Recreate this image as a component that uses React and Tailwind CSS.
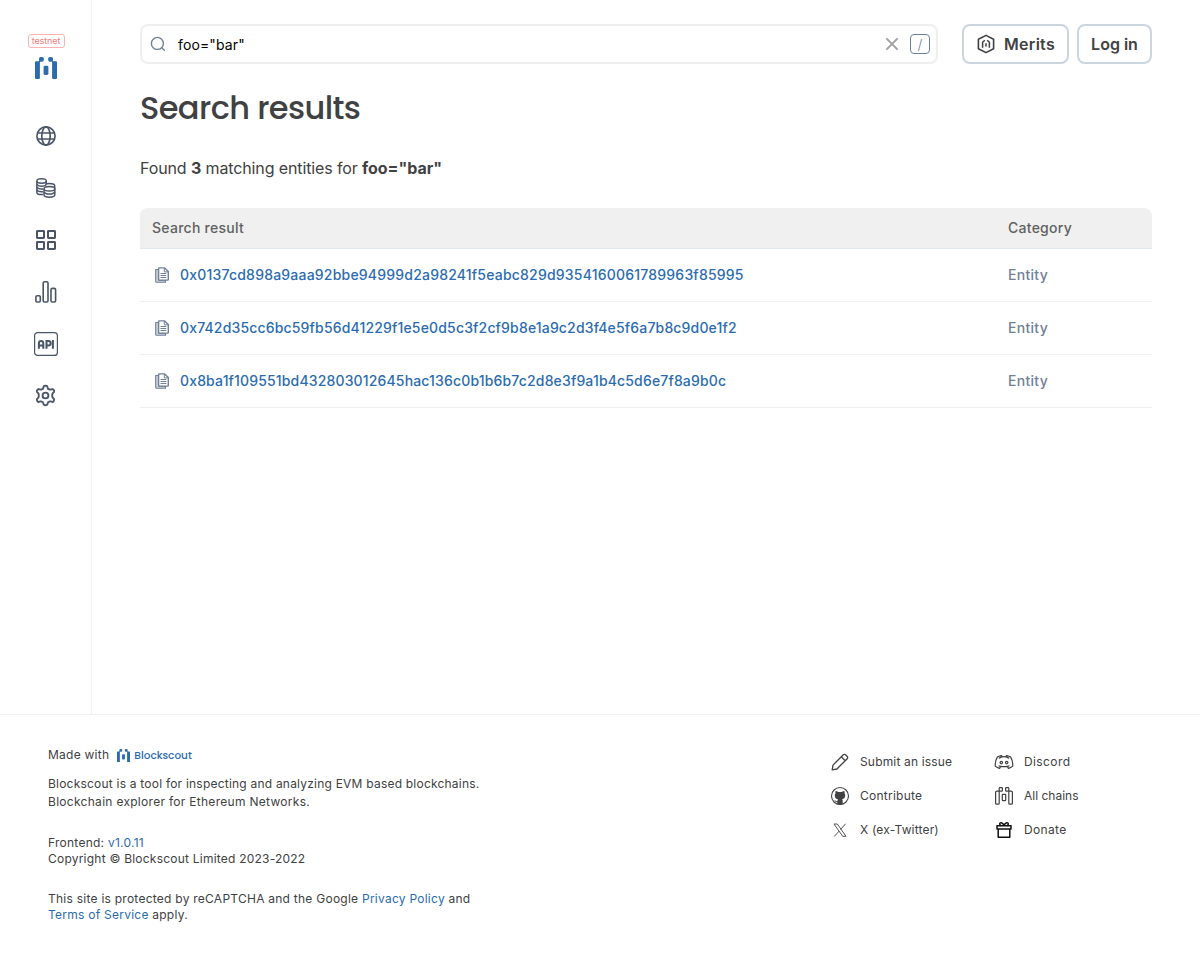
import React from 'react';

const rows = [
  ['0x0137cd898a9aaa92bbe94999d2a98241f5eabc829d9354160061789963f85995', 'tracking-[0.205px]'],
  ['0x742d35cc6bc59fb56d41229f1e5e0d5c3f2cf9b8e1a9c2d3f4e5f6a7b8c9d0e1f2', 'tracking-[0.165px]'],
  ['0x8ba1f109551bd432803012645hac136c0b1b6b7c2d8e3f9a1b4c5d6e7f8a9b0c', 'tracking-[0.158px]'],
];

function LogoMark({ className }) {
  return (
    <svg viewBox="0 0 22 22" fill="currentColor" className={className}>
      <rect x="0" y="4.3" width="4.9" height="17.7" rx="1" />
      <rect x="17.1" y="4.3" width="4.9" height="17.7" rx="1" />
      <rect x="4" y="0" width="4.8" height="4.7" rx="1.6" />
      <rect x="13.2" y="0" width="4.8" height="4.7" rx="1.6" />
      <path d="M3 5.2 5 3.2v2z M19 5.2 17 3.2v2z" />
      <rect x="8.6" y="8.7" width="4.8" height="9.2" rx="1.4" />
    </svg>
  );
}

function GlobeIcon() {
  return (
    <svg viewBox="0 0 20 20" className="size-5" fill="none" stroke="currentColor" strokeWidth="1.65">
      <circle cx="10" cy="10" r="9.1" />
      <ellipse cx="10" cy="10" rx="4.2" ry="9.1" />
      <path d="M1.6 7h16.8M1.6 13h16.8" />
    </svg>
  );
}

function CoinsIcon() {
  return (
    <svg viewBox="0 0 20 20" className="size-5" fill="none" stroke="currentColor" strokeWidth="1.5">
      <ellipse cx="5.6" cy="3" rx="4.7" ry="2.2" />
      <path d="M.9 3v11.4c0 1.2 2 2.1 4.7 2.1.5 0 1 0 1.4-.1M10.3 3v2.9" />
      <path d="M.9 6.2c.5 1.3 2.2 2 4.7 2s4.2-.7 4.7-2M.9 9c.5 1.3 2.2 2 4.7 2 .6 0 1.2 0 1.6-.1M.9 11.8c.5 1.3 2.2 2 4.7 2 .6 0 1 0 1.4-.1" />
      <path d="M9.7 6.2c1-.5 2.3-.8 3.7-.8 2.9 0 5.3 1 5.3 2.4v3" />
      <path fill="#fff" d="M8 10.8v6c0 1.4 2.4 2.4 5.4 2.4s5.400-1 5.400-2.400v-6" />
      <ellipse cx="13.4" cy="10.8" rx="5.4" ry="2.3" fill="#fff" />
      <path d="M8 13.8c.5 1.5 2.5 2.3 5.400 2.300s4.900-.8 5.400-2.300" />
    </svg>
  );
}

function AppsIcon() {
  return (
    <svg viewBox="0 0 20 20" className="size-5" fill="none" stroke="currentColor" strokeWidth="2">
      <rect x="1" y="1" width="7" height="7" rx=".4" />
      <rect x="12" y="1" width="7" height="7" rx=".4" />
      <rect x="1" y="12" width="7" height="7" rx=".4" />
      <rect x="12" y="12" width="7" height="7" rx=".4" />
    </svg>
  );
}

function StatsIcon() {
  return (
    <svg viewBox="0 0 22 22" className="size-[22px]" fill="none" stroke="currentColor" strokeWidth="1.6">
      <rect x=".9" y="14.8" width="4.4" height="6.2" rx="1.3" />
      <rect x="8.2" y=".8" width="4.8" height="20.2" rx="1.3" />
      <rect x="16" y="7.4" width="4.6" height="13.6" rx="1.3" />
    </svg>
  );
}

function ApiIcon() {
  return (
    <svg viewBox="0 0 24 24" className="size-6" fill="none" stroke="currentColor">
      <rect x=".6" y=".6" width="22.8" height="22.8" rx="3" strokeWidth="1.2" />
      <path strokeWidth="2" d="M4.9 16.7v-5.2c0-1.500.8-2.400 2.200-2.400s2.200.9 2.200 2.400v5.200M4.900 13.500h4.400M12.500 16.700V9.100h1.900a2.200 2.200 0 0 1 0 4.500h-1.900M18.900 8v8.700" />
    </svg>
  );
}

function GearIcon() {
  return (
    <svg viewBox="0 0 24 24" className="mb-px size-[25px]" fill="none" stroke="currentColor" strokeWidth="1.8" strokeLinejoin="round">
      <path d="M10.300 3.200c.3-.7 3.100-.7 3.400 0l.6 2c.1.400.4.600.8.700l.6.300c.4.200.7.200 1.100.1l1.700-.5c.9-.2 2.200 2 1.700 2.700l-1.300 1.500c-.3.300-.4.700-.4 1v2c0 .3.100.700.4 1l1.300 1.500c.5.700-.8 2.900-1.700 2.700l-1.700-.5c-.4-.1-.7-.1-1.100.1l-.6.300c-.4.100-.7.300-.8.700l-.6 2c-.3.700-3.100.7-3.400 0l-.6-2c-.1-.4-.4-.6-.8-.7l-.6-.3c-.4-.2-.7-.2-1.100-.1l-1.700.5c-.9.200-2.200-2-1.700-2.700L5.100 14c.3-.3.400-.7.400-1v-2c0-.3-.1-.7-.4-1L3.800 8.500c-.5-.7.800-2.900 1.700-2.700l1.700.5c.4.100.7.100 1.100-.1l.6-.3c.4-.1.700-.3.800-.7z" />
      <circle cx="12" cy="12" r="2.8" />
    </svg>
  );
}

function MeritsIcon() {
  return (
    <svg viewBox="0 0 20 20" className="size-5" fill="none" stroke="currentColor" strokeWidth="1.6" strokeLinejoin="round">
      <path d="M10 1.4 17.6 5.3v9.4L10 18.6 2.400 14.700V5.300z" />
      <path d="M6.600 13.800V8.300l2.200-2M13.400 13.800V8.300l-2.200-2M10 9.300v3.200" strokeWidth="1.5" />
    </svg>
  );
}

function DocsIcon() {
  return (
    <svg viewBox="0 0 14 16" className="h-4 w-3.5 shrink-0" fill="none" stroke="currentColor" strokeLinejoin="round">
      <path d="M.7 2.500h3v10.600h6.800v2.200H1.500a.8.8 0 0 1-.8-.8z" fill="currentColor" fillOpacity=".35" strokeWidth="1.1" />
      <path d="M4.200.9h5.400L13.300 4.600v7.900a.6.6 0 0 1-.6.6H4.200a.6.6 0 0 1-.6-.6V1.500a.6.6 0 0 1 .6-.6z" fill="#fff" strokeWidth="1.4" />
      <path d="M9.300 1v3.900h3.900" strokeWidth="1" />
      <path d="M5.500 6.500h5.800M5.500 8.500h5.800M5.500 10.500h5.800" strokeWidth="1" />
    </svg>
  );
}

function PencilIcon() {
  return (
    <svg viewBox="0 0 20 20" className="size-5" fill="none" stroke="currentColor" strokeWidth="1.3" strokeLinejoin="round">
      <path d="m2.200 17.800.8-4.700L13.300 2.800c.7-.7 1.500-.7 2.200 0l1.700 1.700c.7.700.7 1.500 0 2.200L6.900 17zM11.300 4.800l3.900 3.900" />
    </svg>
  );
}

function GithubIcon() {
  return (
    <svg viewBox="0 0 20 20" className="size-5">
      <circle cx="10" cy="10" r="8.5" fill="none" stroke="currentColor" strokeWidth="1.1" />
      <path fill="currentColor" d="M5.700 4.900c.9 0 1.800.5 2.500 1h3.600c.7-.5 1.600-1 2.500-1 .4 1 .4 1.800.2 2.400.5.600.7 1.300.7 2.200 0 2.500-1.500 3.400-3.100 3.700.4.500.6 1 .6 1.700v3.300l-2.700.5-2.700-.5v-2c-1.700.2-2-.8-2.500-1.500l-.8-.700c1.200-.2 1.600 1.200 2.600 1.300l.8-.1c0-.7.200-1.400.6-1.900-1.700-.3-3.200-1.200-3.200-3.800 0-.9.300-1.600.7-2.200-.2-.600-.200-1.400.2-2.400z" />
    </svg>
  );
}

function XIcon() {
  return (
    <svg viewBox="0 0 20 20" className="size-5" fill="none" stroke="currentColor" strokeWidth=".9">
      <path d="M4 4h3.300l8.700 12.300h-3.300zM15.600 3.800l-5 5.600M9 11.200l-4.800 5.300" />
    </svg>
  );
}

function DiscordIcon() {
  return (
    <svg viewBox="0 0 20 20" className="size-5" fill="none" stroke="currentColor" strokeWidth="1.2" strokeLinejoin="round">
      <path d="M7.800 3.900 7 3.600C5.500 3.900 4.300 4.400 3.300 5.100 1.900 7.500 1.100 10.800 1.300 14.100c1.200 1.200 2.500 1.900 4.300 2.300l1.100-2.100c2.200.5 4.400.5 6.600 0l1.100 2.100c1.800-.4 3.100-1.100 4.300-2.300.2-3.300-.6-6.600-2-9-1-.7-2.200-1.200-3.700-1.500l-.8.300-.4.900c-1.200-.2-2.400-.2-3.600 0zM4.600 13.700c.7.300 1.400.5 2.100.6M15.400 13.700c-.7.300-1.400.5-2.100.6M4.800 6.300c1-.6 2.200-1 3.400-1.600M15.200 6.300c-1-.6-2.200-1-3.400-1.600" />
      <circle cx="7.3" cy="10.6" r="1.2" />
      <circle cx="12.7" cy="10.6" r="1.2" />
    </svg>
  );
}

function ChainsIcon() {
  return (
    <svg viewBox="0 0 20 20" className="size-5" fill="none" stroke="currentColor" strokeWidth="1.2">
      <path d="M5.200 5.200H2.900c-.8 0-1.300.5-1.300 1.200v10.800c0 .7.200.9.900.9h1.800c.6 0 .9-.3.900-.9zM14.800 5.200h2.300c.8 0 1.300.5 1.300 1.200v10.800c0 .7-.2.9-.9.900h-1.800c-.6 0-.9-.3-.9-.9z" />
      <rect x="5.2" y="1.7" width="3.2" height="3.4" rx=".7" />
      <rect x="11.6" y="1.7" width="3.2" height="3.4" rx=".7" />
      <rect x="8.3" y="8.3" width="3.4" height="6.4" rx=".7" />
    </svg>
  );
}

function GiftIcon() {
  return (
    <svg viewBox="0 0 20 20" className="size-5 text-[#101112]" fill="none" stroke="currentColor" strokeWidth="1.5" strokeLinejoin="round">
      <rect x="3" y="5.8" width="14" height="3.2" />
      <path d="M4.200 9v8.200h11.600V9" />
      <path d="M10 5.500C8.800 2.300 5.400 1.900 5.700 4.200c.1.900.8 1.300 1.500 1.500M10 5.500c1.200-3.200 4.600-3.600 4.300-1.300-.1.900-.8 1.300-1.500 1.500" />
    </svg>
  );
}

const nav = [GlobeIcon, CoinsIcon, AppsIcon, StatsIcon, ApiIcon, GearIcon];

const links = [
  [
    [PencilIcon, 'Submit an issue', 'tracking-[0.17px]'],
    [GithubIcon, 'Contribute', 'tracking-[0.25px]'],
    [XIcon, 'X (ex-Twitter)', 'tracking-[0.17px]'],
  ],
  [
    [DiscordIcon, 'Discord', 'tracking-[0.4px]'],
    [ChainsIcon, 'All chains', ''],
    [GiftIcon, 'Donate', 'tracking-[0.33px]'],
  ],
];

export default function App() {
  return (
    <div className="flex h-[955px] w-[1200px] flex-col overflow-hidden bg-white font-['Inter',sans-serif] text-[#404142]">
      <div className="flex h-[714px]">
        <aside className="flex w-[92px] shrink-0 flex-col items-center border-r border-[#efeff0] pt-[34px]">
          <span className="ml-px flex h-[14px] w-[37px] items-center justify-center rounded-[3px] border border-[#feb2b2] pb-px text-[9px] leading-none tracking-[-0.1px] text-[#f08080]">
            testnet
          </span>
          <LogoMark className="mt-[9px] size-[22px] text-[#2b6cb0]" />
          <nav className="mt-[37px] flex flex-col items-center gap-3 text-[#4a5568]">
            {nav.map((Icon, i) => (
              <a key={i} className="flex size-10 items-center justify-center">
                <Icon />
              </a>
            ))}
          </nav>
        </aside>

        <main className="flex-1 pl-12 pr-12 pt-6">
          <div className="flex">
            <div className="flex h-10 w-[798px] items-center rounded-lg border-2 border-[#efeff0] pl-2 pr-1.5">
              <svg viewBox="0 0 16 16" className="size-4 text-[#718096]" fill="none" stroke="currentColor" strokeWidth="1.4" strokeLinecap="round">
                <circle cx="7.4" cy="7.4" r="6" />
                <path d="m12 12 2.300 2.300" />
              </svg>
              <span className="ml-3 flex-1 pt-px text-sm tracking-[0.12px] text-black">foo="bar"</span>
              <svg viewBox="0 0 14 14" className="size-3.5 text-[#a0a1a2]" fill="none" stroke="currentColor" strokeWidth="2">
                <path d="m1.400 1.400 11.200 11.200M12.600 1.400 1.400 12.600" />
              </svg>
              <span className="ml-[11px] flex size-5 items-center justify-center rounded-[4px] border border-[#718096] pt-0.5 text-sm font-light text-[#718096]">
                /
              </span>
            </div>
            <button className="ml-6 flex h-10 w-[107px] items-center rounded-lg border-2 border-[#cbd5e0] pl-3 text-base font-semibold">
              <MeritsIcon />
              <span className="ml-2 tracking-[0.3px]">Merits</span>
            </button>
            <button className="ml-2 flex h-10 w-[75px] items-center justify-center rounded-lg border-2 border-[#cbd5e0] text-base font-semibold whitespace-nowrap">
              Log in
            </button>
          </div>

          <h1 className="mt-6 h-10 font-['Poppins','Inter',sans-serif] text-[32px] leading-10 font-medium tracking-[-0.6px]">
            Search results
          </h1>
          <p className="mt-7 text-base leading-6 tracking-[-0.12px]">
            Found <b className="font-bold">3</b> matching entities for <b className="font-bold tracking-[-0.03px]">foo="bar"</b>
          </p>

          <div className="mt-7 text-sm font-medium">
            <div className="flex h-[41px] items-center rounded-t-lg border-b border-[#e2e8f0] bg-[#f0f0f0] px-3 tracking-[0.26px] text-[#606162]">
              <span className="w-[856px]">Search result</span>
              <span>Category</span>
            </div>
            {rows.map(([hash, tracking]) => (
              <div key={hash} className="flex h-[53px] items-center border-b border-[#efeff0] pr-3 pl-[15px]">
                <span className="flex w-[853px] items-center text-[#2b6cb0]">
                  <span className="mr-[11px] text-[#718096]"><DocsIcon /></span>
                  <span className={tracking}>{hash}</span>
                </span>
                <span className="tracking-[0.3px] text-[#718096]">Entity</span>
              </div>
            ))}
          </div>
        </main>
      </div>

      <footer className="flex h-[241px] border-t border-[#efeff0] px-12 text-xs">
        <div className="w-[782px] shrink-0 pt-8">
          <div className="flex h-4 items-center">
            <span className="tracking-[0.25px]">Made with</span>
            <span className="ml-2 flex items-center text-[#2b6cb0]">
              <LogoMark className="size-[13px]" />
              <span className="ml-1 pt-px font-['Poppins','Inter',sans-serif] text-[10.5px] font-medium">Blockscout</span>
            </span>
          </div>
          <p className="mt-3 leading-[18px]">
            <span className="tracking-[0.215px]">Blockscout is a tool for inspecting and analyzing EVM based blockchains.</span>
            <br />
            <span className="tracking-[0.29px]">Blockchain explorer for Ethereum Networks.</span>
          </p>
          <p className="mt-6 leading-4 tracking-[0.25px]">
            Frontend: <a className="text-[#2b6cb0]">v1.0.11</a>
            <br />
            <span className="tracking-[0.22px]">Copyright © Blockscout Limited 2023-2022</span>
          </p>
          <p className="mt-6 leading-4 tracking-[0.25px]">
            This site is protected by reCAPTCHA and the Google <a className="text-[#2b6cb0]">Privacy Policy</a> and
            <br />
            <a className="text-[#2b6cb0]">Terms of Service</a> apply.
          </p>
        </div>
        <div className="flex pt-8">
          {links.map((col, i) => (
            <div key={i} className="flex w-[164px] shrink-0 flex-col gap-1">
              {col.map(([Icon, label, tracking]) => (
                <a key={label} className="flex h-[30px] items-center gap-2.5">
                  <Icon />
                  <span className={tracking}>{label}</span>
                </a>
              ))}
            </div>
          ))}
        </div>
      </footer>
    </div>
  );
}
